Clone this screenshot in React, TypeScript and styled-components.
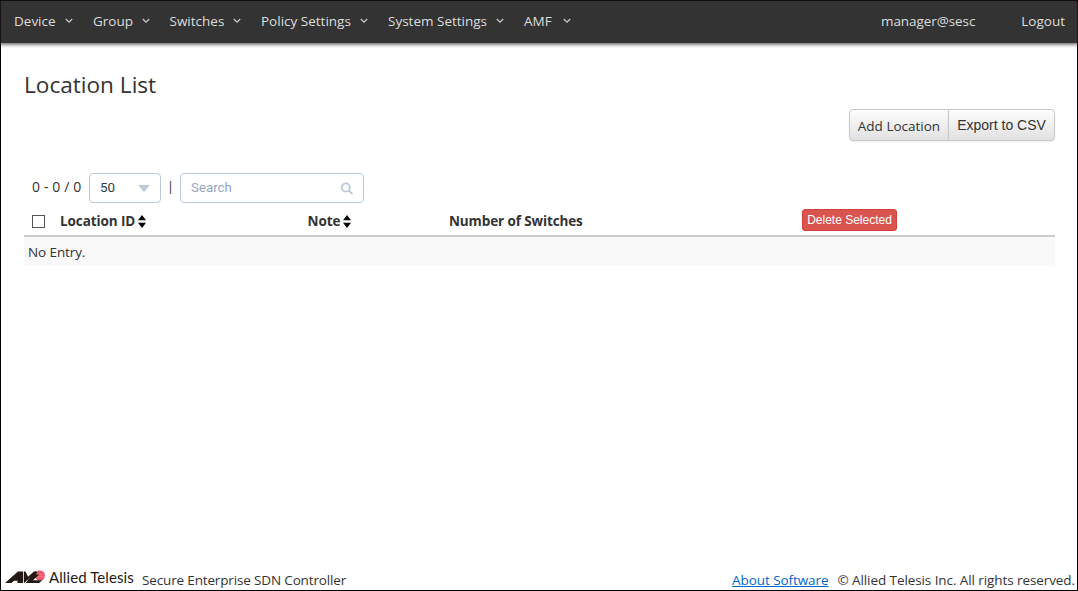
import React from "react";
import styled, { createGlobalStyle } from "styled-components";

const GlobalStyle = createGlobalStyle`
  * { box-sizing: border-box; }
  body { margin: 0; background: #fff; overflow: hidden; }
`;

const Page = styled.div`
  width: 1078px;
  height: 591px;
  border: 1px solid #000;
  display: flex;
  flex-direction: column;
  background: #fff;
  color: #333;
  font: 13.5px/20px "Open Sans", "Noto Sans", sans-serif;
  white-space: nowrap;
`;

const NavBar = styled.nav`
  flex: none;
  height: 42px;
  padding: 0 12px 2px 13px;
  display: flex;
  align-items: center;
  gap: 20px;
  background: #333;
  color: #ddd;
  box-shadow: 0 1px 3px 1px rgba(60, 50, 50, 0.65);
`;

const NavItem = styled.div<{ $w: number }>`
  width: ${(p) => p.$w}px;
  display: flex;
  align-items: center;
  justify-content: space-between;
`;

const Label = styled.span<{ $ls?: number }>`
  letter-spacing: ${(p) => p.$ls ?? 0}px;
`;

const Account = styled.div`
  margin-left: auto;
  display: flex;
  gap: 46px;
`;

const Main = styled.main`
  flex: 1;
  padding: 26px 22px 0 23px;
  display: flex;
  flex-direction: column;
`;

const Title = styled.h1`
  margin: 0;
  font-size: 22.6px;
  line-height: 32px;
  font-weight: 400;
`;

const Actions = styled.div`
  margin-top: 8px;
  display: flex;
  justify-content: flex-end;
`;

const ActionButton = styled.button<{ $side: "left" | "right" }>`
  height: 32px;
  width: ${(p) => (p.$side === "left" ? 100 : 107)}px;
  margin: 0 0 0 ${(p) => (p.$side === "left" ? 0 : -1)}px;
  padding: ${(p) => (p.$side === "left" ? "2px 0 0" : "0")};
  border: 1px solid #c8c8c8;
  border-radius: ${(p) => (p.$side === "left" ? "4px 0 0 4px" : "0 4px 4px 0")};
  background: linear-gradient(#fdfdfd, #e1e1e1);
  box-shadow: 0 1px 2px rgba(0, 0, 0, 0.08);
  color: #333;
  font: ${(p) =>
    p.$side === "left"
      ? '13.5px "Open Sans", sans-serif'
      : '14px "Liberation Sans", sans-serif'};
  white-space: nowrap;
`;

const Filters = styled.div`
  margin-top: 32px;
  height: 30px;
  padding-left: 8px;
  display: flex;
  align-items: center;
`;

const Count = styled.span`
  width: 57px;
  padding-bottom: 3px;
  font-size: 14px;
  letter-spacing: 0.12px;
`;

const Field = styled.div<{ $w: number }>`
  width: ${(p) => p.$w}px;
  height: 30px;
  padding: 0 10px;
  border: 1px solid #b9c9d9;
  border-radius: 4px;
  display: flex;
  align-items: center;
  justify-content: space-between;
  font: 13.3px/26px Roboto, sans-serif;
  color: ${(p) => (p.$w < 100 ? "#2c3e50" : "#93a7be")};
`;

const Divider = styled.span`
  width: 19px;
  text-align: center;
  padding-bottom: 4px;
`;

const Header = styled.div`
  height: 34px;
  padding-top: 2px;
  border-bottom: 2px solid #ccc;
  display: grid;
  grid-template-columns: 36px 247.5px 141.5px 353px 1fr;
  align-items: center;
  font-weight: 700;
`;

const HeadCell = styled.div`
  display: flex;
  align-items: center;
  gap: 3px;
  padding-top: 1px;

  svg {
    margin-top: 2px;
  }
`;

const Checkbox = styled.span`
  width: 13px;
  height: 13px;
  margin: 3px 0 0 8px;
  border: 1px solid #555;
  background: #fff;
`;

const DeleteButton = styled.button`
  width: 95px;
  height: 22px;
  padding: 0;
  border: 1px solid #d43f3a;
  border-radius: 3px;
  background: #d9534f;
  color: #fff;
  font: 12px "Liberation Sans", sans-serif;
`;

const EmptyRow = styled.div`
  height: 29px;
  padding: 5px 4px;
  background: #f9f9f9;
  letter-spacing: -0.1px;
`;

const Footer = styled.footer`
  height: 26px;
  padding: 0 2px 0 4px;
  display: flex;
  align-items: center;
`;

const Brand = styled.span`
  width: 85px;
  margin: 0 8px 0 3px;
  padding-bottom: 1px;
  color: #231815;
  font: 15px/20px Lato, sans-serif;
  letter-spacing: 0.1px;
`;

const Copyright = styled.div`
  margin-left: auto;
  display: flex;
  gap: 9px;
  padding-top: 5px;
`;

const Product = styled.div`
  padding-top: 5px;
`;

const AboutLink = styled.a`
  color: #0066cc;
  text-decoration: underline;
`;

const Chevron = () => (
  <svg width="8" height="6" viewBox="0 0 8 6" fill="none" stroke="#ccc" strokeWidth="1.2">
    <path d="M.8 1 4 4.2 7.2 1" />
  </svg>
);

const SortIcon = () => (
  <svg width="8" height="13" viewBox="0 0 8 13" fill="#000">
    <path d="M4 0 8 5.3H0zM0 7.7h8L4 13z" />
  </svg>
);

const LogoMark = () => (
  <svg width="41" height="14" viewBox="0 0 41 14">
    <circle cx="35" cy="5.6" r="5" fill="#e8596c" />
    <path d="M30.5 4.4h9.3M30.5 6.8h9.3" stroke="#f4a5ae" strokeWidth=".5" />
    <path d="M0 13 13 1.5h5V13h-5.5v-2.3H9L6.5 13z" fill="#231815" />
    <path d="M18.8 1.5h1.7L23 6.8l6-5.3h2.4L19.3 13l-.5-1z" fill="#231815" />
    <path d="M27 4.6 30.4 1.5h2L31 4.6h3.3L28 10.2h9.5L34 13H20.8z" fill="#231815" />
  </svg>
);

const menu = [
  { name: "Device", w: 59 },
  { name: "Group", w: 56.5 },
  { name: "Switches", w: 71.5 },
  { name: "Policy Settings", w: 107 },
  { name: "System Settings", w: 116 },
  { name: "AMF", w: 47 },
];

export default function App() {
  return (
    <Page>
      <GlobalStyle />
      <NavBar>
        {menu.map((m) => (
          <NavItem key={m.name} $w={m.w}>
            <Label>{m.name}</Label>
            <Chevron />
          </NavItem>
        ))}
        <Account>
          <Label $ls={-0.08}>manager@sesc</Label>
          <Label>Logout</Label>
        </Account>
      </NavBar>
      <Main>
        <Title>Location List</Title>
        <Actions>
          <ActionButton $side="left">Add Location</ActionButton>
          <ActionButton $side="right">Export to CSV</ActionButton>
        </Actions>
        <Filters>
          <Count>0 - 0 / 0</Count>
          <Field $w={72}>
            <span>50</span>
            <svg width="12" height="7" viewBox="0 0 12 7">
              <path d="M0 0h12L6 7z" fill="#b9c9d9" />
            </svg>
          </Field>
          <Divider>|</Divider>
          <Field $w={184}>
            <span>Search</span>
            <svg width="13" height="13" viewBox="0 0 13 13" fill="none" stroke="#b9c9d9" strokeWidth="1.8">
              <circle cx="5.8" cy="5.5" r="4.1" />
              <path d="m8.8 8.5 3.7 3.7" />
            </svg>
          </Field>
        </Filters>
        <Header>
          <Checkbox />
          <HeadCell><Label $ls={-0.1}>Location ID</Label><SortIcon /></HeadCell>
          <HeadCell><Label $ls={-0.1}>Note</Label><SortIcon /></HeadCell>
          <HeadCell><Label $ls={-0.12}>Number of Switches</Label></HeadCell>
          <DeleteButton>Delete Selected</DeleteButton>
        </Header>
        <EmptyRow>No Entry.</EmptyRow>
      </Main>
      <Footer>
        <LogoMark />
        <Brand>Allied Telesis</Brand>
        <Product><Label $ls={-0.15}>Secure Enterprise SDN Controller</Label></Product>
        <Copyright>
          <AboutLink><Label $ls={-0.08}>About Software</Label></AboutLink>
          <Label $ls={-0.085}>© Allied Telesis Inc. All rights reserved.</Label>
        </Copyright>
      </Footer>
    </Page>
  );
}
